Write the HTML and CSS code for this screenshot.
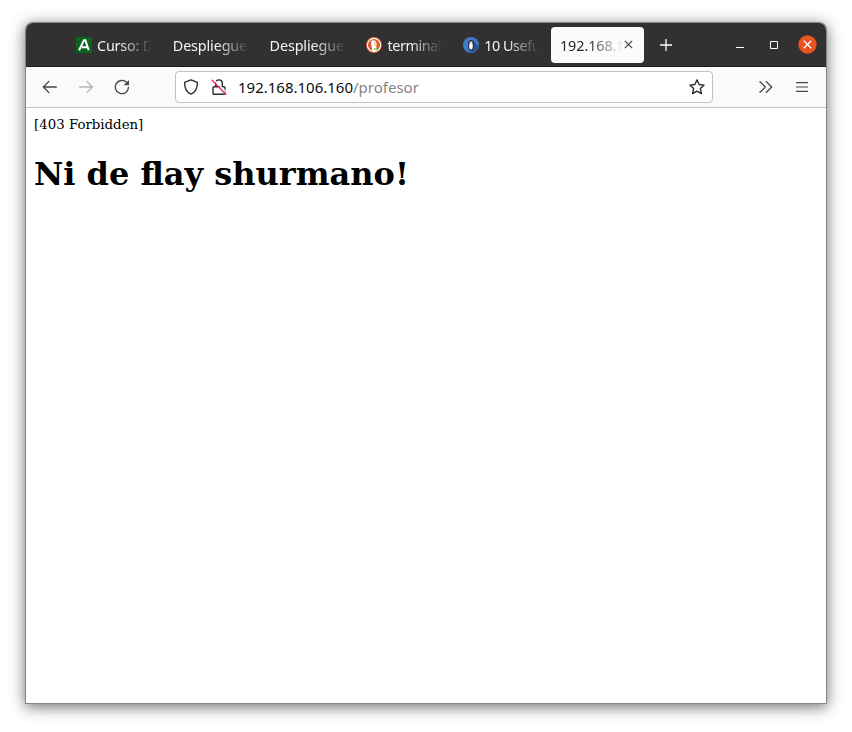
FILE: index.html
```html
<!DOCTYPE html>
<html lang="es">
<head>
<meta charset="utf-8">
<title>192.168.106.160/profesor</title>
<link rel="stylesheet" href="styles.css">
</head>
<body>
<div class="window">
  <header class="titlebar">
    <nav class="tabs">
      <div class="tab">
        <svg class="favicon" viewBox="0 0 16 16"><rect width="16" height="16" fill="#0a6420"/><path d="M3.1 13.2 8 3.3h1.400l3.300 9.900M6 10.300h5.500" fill="none" stroke="#fff" stroke-width="2"/></svg>
        <span class="label curso">Curso: D</span>
      </div>
      <div class="tab"><span class="label despliegue">Despliegue</span></div>
      <div class="tab"><span class="label despliegue">Despliegue</span></div>
      <div class="tab">
        <svg class="favicon" viewBox="0 0 16 16"><circle cx="8" cy="8" r="8" fill="#de5833"/><circle cx="8" cy="8" r="6.6" fill="#de5833" stroke="#fff" stroke-width="1.1"/><path d="M5.3 4.1C6.8 2.7 10 3.3 10.4 6c.2 1.2-.5 2 0 3.2l.5 4.2-3 .9-1.5-.6C6 10.8 4.6 6.6 5.3 4.1z" fill="#fff"/><path d="M8.2 7.5c1.2-.4 3.4-.4 3.5.1s-2.2 1.4-3.5 1z" fill="#fdd20a"/><path d="m8 11 1.3.6 1.5-.8.2 2.3-1.6-.5-1.2.6z" fill="#65bc46"/><circle cx="8.8" cy="5.8" r=".6" fill="#2d4f8e"/></svg>
        <span class="label terminal">terminal</span>
      </div>
      <div class="tab">
        <svg class="favicon" viewBox="0 0 16 16"><circle cx="8" cy="8" r="8" fill="#3f7cc4"/><path d="m10 3 5.5 6A8 8 0 0 1 8 16l-2-3z" fill="#28578f"/><path d="M5.3 11V6.2C5.3 1.8 10.8 1.8 10.8 6.2V11L9.6 13H6.4z" fill="#1d2430"/><ellipse cx="8" cy="9" rx="1.8" ry="3.6" fill="#fff"/><path d="M6.7 4.5h2.7v2H6.7z" fill="#eee"/><path d="m7.1 5.7 1 1 1-1z" fill="#e8ac35"/></svg>
        <span class="label useful">10 Usefu</span>
      </div>
      <div class="tab selected">
        <span class="label address">192.168.1</span>
        <svg class="close" viewBox="0 0 9 9"><path d="m.8.8 7.4 7.4m0-7.4L.8 8.2" fill="none" stroke="#3c3c3c" stroke-width="1.1"/></svg>
      </div>
    </nav>
    <svg class="new-tab" viewBox="0 0 12 12"><path d="M6 0v12M0 6h12" stroke="#fff" stroke-width="1.3"/></svg>
    <div class="controls">
      <svg width="8" height="8" viewBox="0 0 8 8"><path d="M0 6.5h8" stroke="#fff"/></svg>
      <svg width="8" height="8" viewBox="0 0 8 8"><path d="M.5.5h7v7h-7z" fill="none" stroke="#fff"/></svg>
      <svg width="19" height="19" viewBox="0 0 19 19"><circle cx="9.5" cy="9.5" r="9.2" fill="#e95420"/><path d="m5.8 5.8 7.4 7.4m0-7.4-7.4 7.4" stroke="#fff" stroke-width="1.3"/></svg>
    </div>
  </header>
  <div class="toolbar">
    <div class="navigation">
      <svg viewBox="0 0 16 16"><path d="M14.3 8H1.3m5.6-5.6L1.3 8l5.6 5.6" fill="none" stroke="#45454a" stroke-width="1.3" stroke-linecap="round" stroke-linejoin="round"/></svg>
      <svg viewBox="0 0 16 16"><path d="M1.5 8h13M8.9 2.4 14.5 8l-5.6 5.6" fill="none" stroke="#b5b5b7" stroke-width="1.3" stroke-linecap="round" stroke-linejoin="round"/></svg>
      <svg viewBox="0 0 16 16"><path d="M14.5 8.5a6.6 6.6 0 1 1-2-5.2l1.7 1.7" fill="none" stroke="#45454a" stroke-width="1.3" stroke-linecap="round"/><path d="M15 .9v5.3H9.7z" fill="#45454a"/></svg>
    </div>
    <div class="urlbar">
      <svg viewBox="0 0 16 16"><path d="M8 .8 14.4 3.3c.3 5.6-2 9.8-6.4 11.9C3.6 13.1 1.3 8.9 1.6 3.3z" fill="none" stroke="#2b2a33" stroke-width="1.35" stroke-linejoin="round"/></svg>
      <svg class="lock" viewBox="0 0 16 16"><path d="M4.7 7V4.2a3.3 3.3 0 0 1 6.6 0V7M3 7.7h10a1 1 0 0 1 1 1v5.5a1 1 0 0 1-1 1H3a1 1 0 0 1-1-1V8.7a1 1 0 0 1 1-1z" fill="none" stroke="#2b2a33" stroke-width="1.4"/><path d="m2.6.6 13.2 13.2" stroke="#fff" stroke-width="1.4"/><path d="m1.2 1.2 13.6 14" stroke="#ef2b55" stroke-width="1.3" stroke-linecap="round"/></svg>
      <span class="url"><span class="host">192.168.106.160</span><span class="path">/profesor</span></span>
      <svg class="star" viewBox="0 0 16 16"><path d="m8 .9 2.1 4.6 5 .6-3.7 3.4 1 5.1L8 12.1l-4.4 2.5 1-5.1L.9 6.1l5-.6z" fill="none" stroke="#2b2a33" stroke-width="1.35" stroke-linejoin="round"/></svg>
    </div>
    <div class="tools">
      <svg width="14" height="12" viewBox="0 0 14 12"><path d="m1 .7 5.3 5.3L1 11.3M7.4.7 12.7 6l-5.3 5.3" fill="none" stroke="#45454a" stroke-width="1.3" stroke-linecap="round" stroke-linejoin="round"/></svg>
      <svg width="12" height="10" viewBox="0 0 12 10"><path d="M0 .6h12M0 5h12M0 9.4h12" stroke="#45454a" stroke-width="1.2"/></svg>
    </div>
  </div>
  <main class="page">
    <div class="status">[403 Forbidden]</div>
    <h1>Ni de <span class="tight">f</span>lay shurmano!</h1>
  </main>
</div>
</body>
</html>
```
FILE: styles.css
```css
* { box-sizing: border-box; }

body {
  margin: 0;
  height: 732px;
  padding: 23px 26px 29px;
  overflow: hidden;
  background: #fff;
  font-family: "Noto Sans", sans-serif;
}

.window {
  display: flex;
  flex-direction: column;
  width: 800px;
  height: 680px;
  border-radius: 7px 7px 0 0;
  background: #fff;
  box-shadow: 0 0 0 1px #858585, 0 3px 14px 1px rgba(0, 0, 0, .5), 0 2px 24px rgba(0, 0, 0, .1);
}

svg { display: block; flex: none; }

.titlebar {
  display: flex;
  align-items: center;
  height: 44px;
  padding: 0 9px 0 41px;
  border-bottom: 1px solid #1d1b1c;
  border-radius: 7px 7px 0 0;
  background: #333031;
}

.tabs { display: flex; gap: 3.8px; }

.tab {
  display: flex;
  align-items: center;
  width: 93px;
  height: 36px;
  padding: 0 8px 0 9px;
  color: #f4f4f4;
  font-size: 14.4px;
}

.favicon { width: 16px; height: 16px; margin-right: 5px; }

.label {
  flex: 1;
  min-width: 0;
  padding-top: 2px;
  line-height: 20px;
  overflow: hidden;
  white-space: nowrap;
  mask-image: linear-gradient(to left, transparent, #000 32px);
}

.curso { letter-spacing: -.2px; }
.despliegue { letter-spacing: -.15px; }
.terminal { letter-spacing: -.4px; }
.useful { letter-spacing: -.45px; }
.address { letter-spacing: -.1px; }

.selected {
  padding-right: 11px;
  border-radius: 4px;
  background: #fbfbfb;
  color: #29282d;
}

.selected .label {
  margin-right: -4px;
  padding-right: 4px;
  mask-image: linear-gradient(to left, transparent 4px, #000 40px);
}

.close { width: 9px; height: 9px; }

.new-tab { width: 12px; height: 12px; margin-left: 16px; }

.controls {
  display: flex;
  align-items: center;
  gap: 26px;
  margin-left: auto;
}

.controls svg:last-child { margin-left: -6px; }

.toolbar {
  display: flex;
  align-items: center;
  height: 41px;
  padding: 0 18px 0 16px;
  border-bottom: 1px solid #c5c5c5;
  background: #fafafa;
}

.navigation { display: flex; gap: 20px; }
.navigation svg, .urlbar svg { width: 16px; height: 16px; }

.urlbar {
  display: flex;
  align-items: center;
  width: 538px;
  height: 32px;
  margin-left: 45px;
  padding: 0 7px;
  border: 1px solid #c2c2c2;
  border-radius: 4px;
  background: #fff;
}

.urlbar .lock { margin-left: 12px; }
.url { margin-left: 11px; font-size: 15px; line-height: 20px; }
.host { color: #0c0c0d; }
.path { color: #858585; }
.urlbar .star { margin-left: auto; }

.tools {
  display: flex;
  align-items: center;
  gap: 23px;
  margin-left: auto;
}

.page {
  flex: 1;
  padding: 8px;
  color: #000;
  font-family: "DejaVu Serif", serif;
}

.status { font-size: 13.333px; line-height: 17px; }
h1 { margin: 22px 0 0; font-size: 32px; line-height: 38px; }
.tight { letter-spacing: -2.5px; }
```
